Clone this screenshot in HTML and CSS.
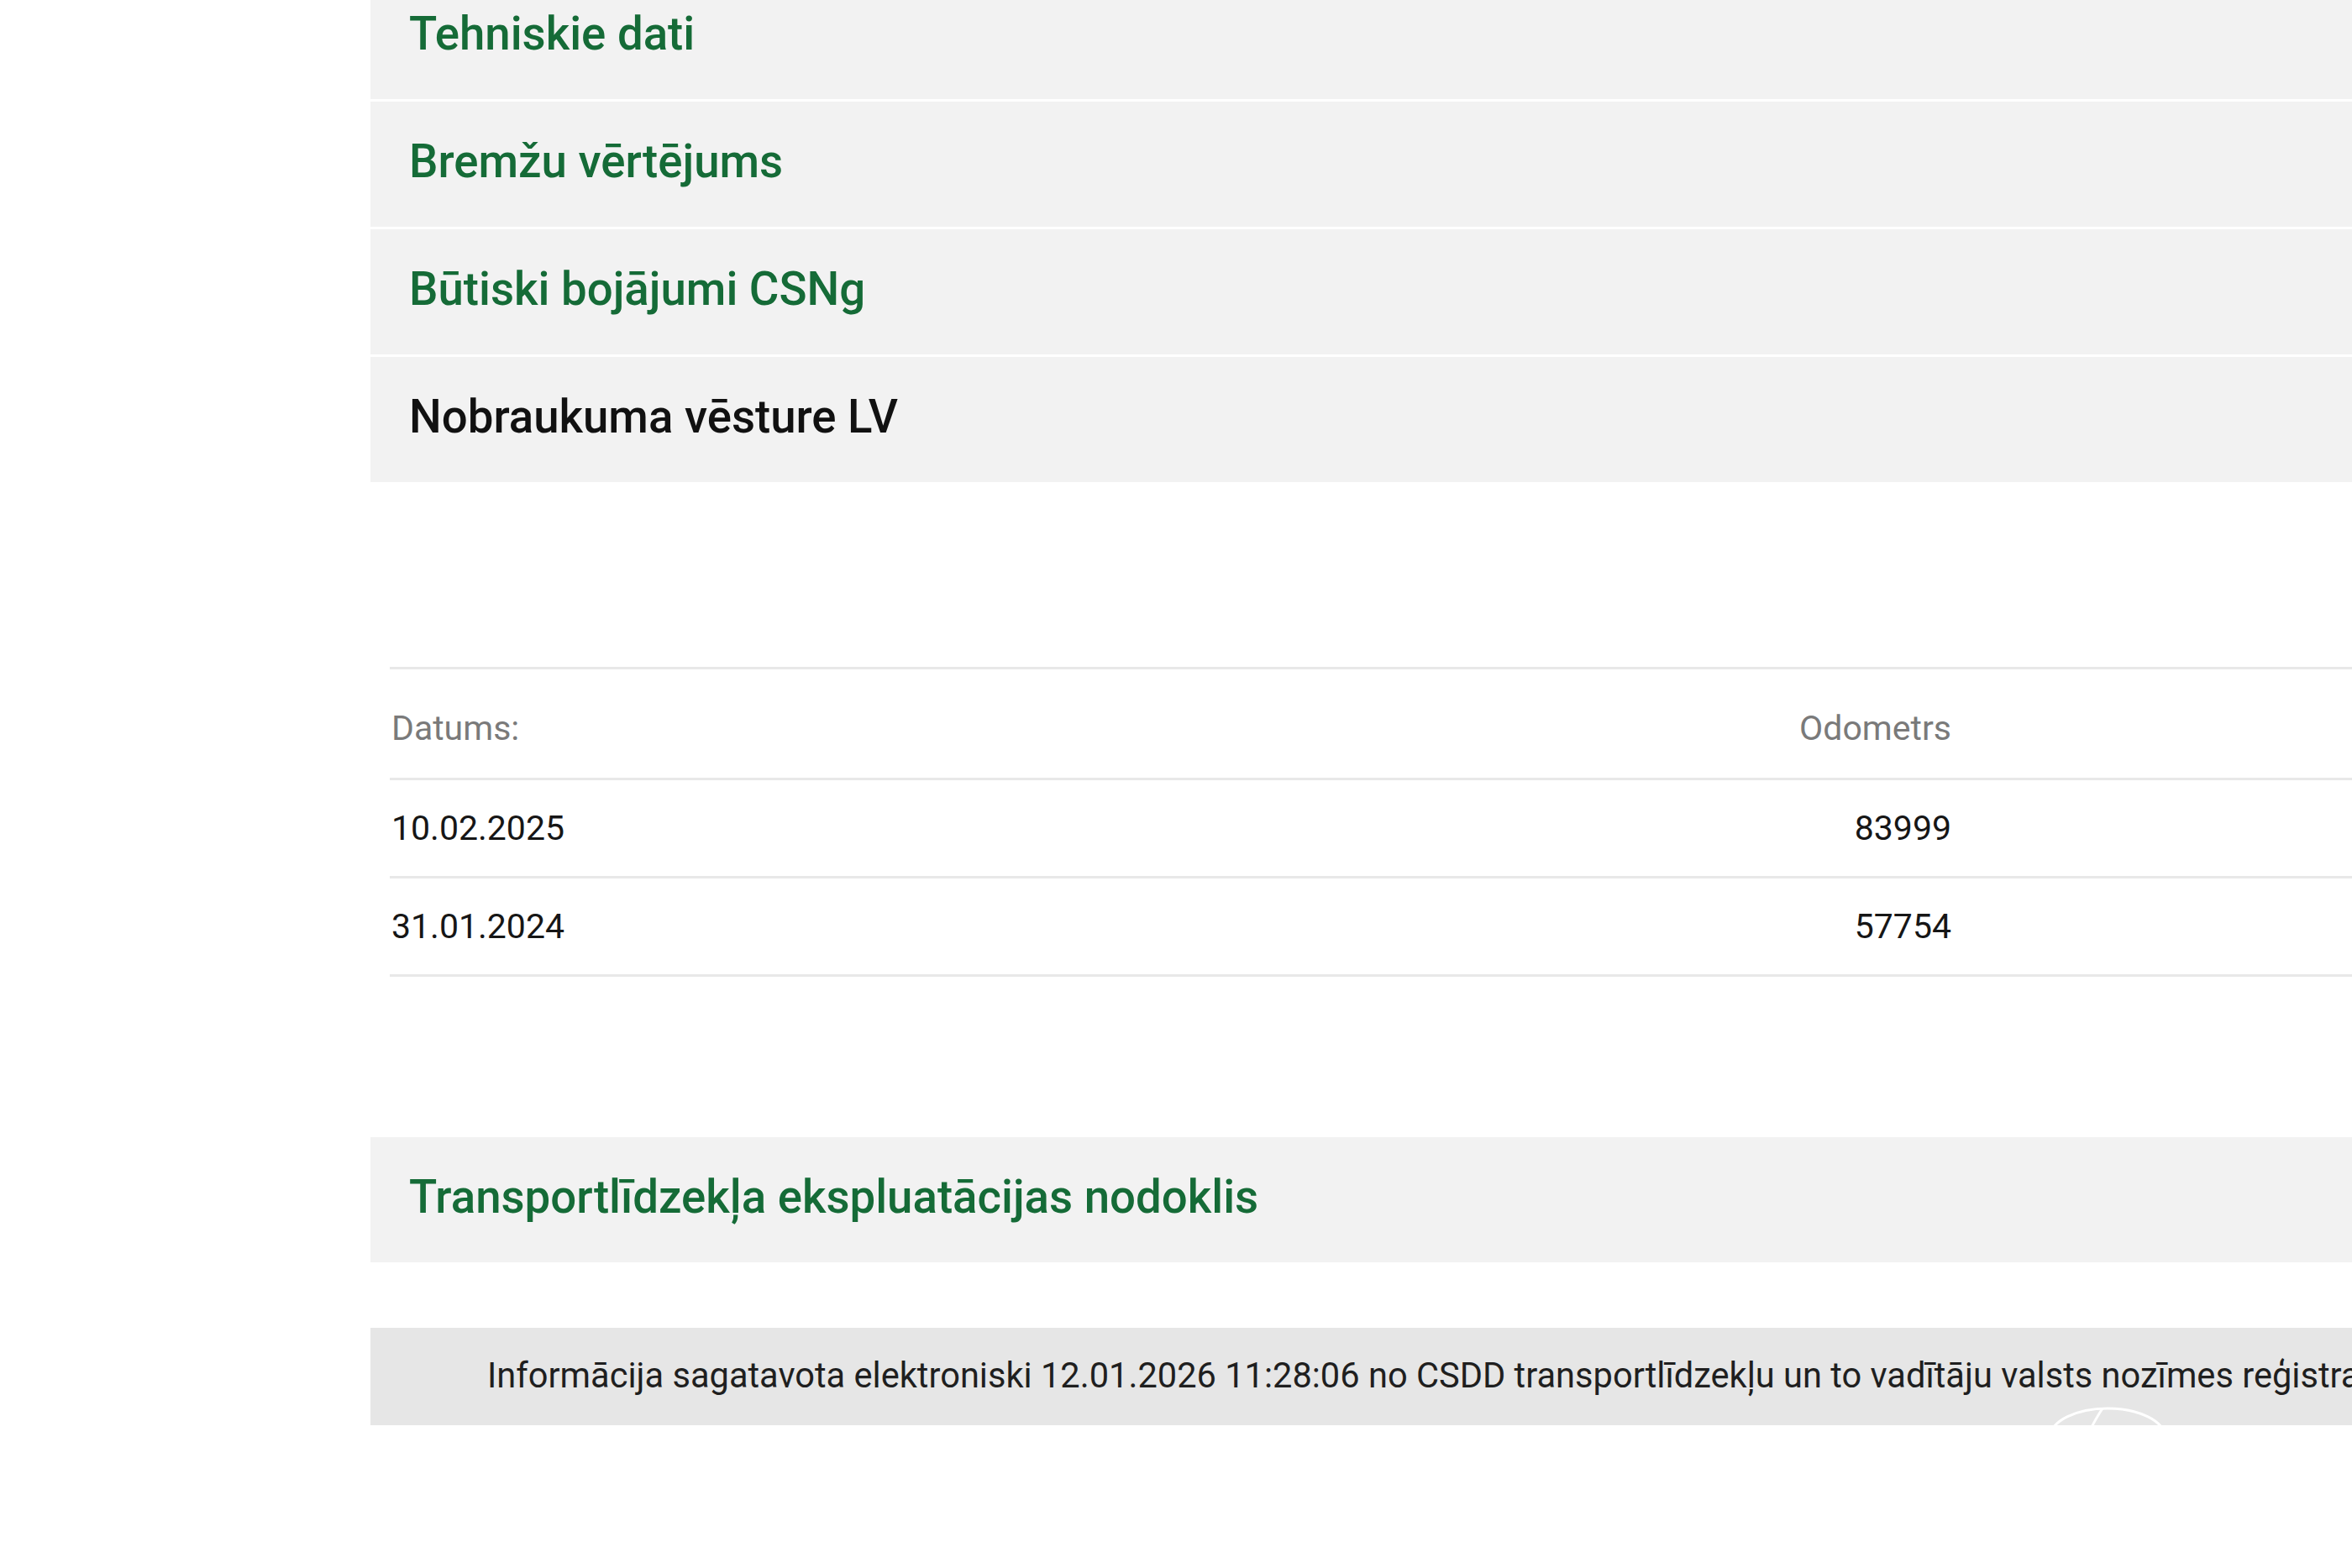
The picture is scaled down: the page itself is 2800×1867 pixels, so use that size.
FILE: index.html
```html
<!DOCTYPE html>
<html lang="lv">
<head>
<meta charset="utf-8">
<title>Nobraukuma vēsture</title>
<link rel="stylesheet" href="styles.css">
</head>
<body>
<div class="page">
  <div class="content">
    <div class="accordion">
      <div class="acc-row"><span class="acc-title">Tehniskie dati</span></div>
      <div class="acc-row"><span class="acc-title">Bremžu vērtējums</span></div>
      <div class="acc-row"><span class="acc-title">Būtiski bojājumi CSNg</span></div>
      <div class="acc-row acc-open"><span class="acc-title">Nobraukuma vēsture LV</span></div>
    </div>

    <div class="history">
      <div class="hist-row hist-head">
        <div class="c-date">Datums:</div>
        <div class="c-odo">Odometrs</div>
        <div class="c-rest"></div>
      </div>
      <div class="hist-row">
        <div class="c-date">10.02.2025</div>
        <div class="c-odo">83999</div>
        <div class="c-rest"></div>
      </div>
      <div class="hist-row">
        <div class="c-date">31.01.2024</div>
        <div class="c-odo">57754</div>
        <div class="c-rest"></div>
      </div>
    </div>

    <div class="accordion tax">
      <div class="acc-row"><span class="acc-title">Transportlīdzekļa ekspluatācijas nodoklis</span></div>
    </div>

    <div class="footer-note">
      <span class="note-text">Informācija sagatavota elektroniski 12.01.2026 11:28:06 no CSDD transportlīdzekļu un to vadītāju valsts nozīmes reģistra</span>
      <svg class="watermark" width="150" height="70" viewBox="0 0 150 70">
        <ellipse cx="72" cy="36" rx="68" ry="34" fill="none" stroke="#ffffff" stroke-width="3"/>
        <path d="M66 2 Q58 14 50 30" fill="none" stroke="#ffffff" stroke-width="3"/>
      </svg>
    </div>
  </div>
</div>
</body>
</html>
```

FILE: styles.css
```css
html, body {
  margin: 0;
  padding: 0;
  background: #ffffff;
  overflow: hidden;
}

body {
  width: 2800px;
  height: 1867px;
  font-family: Roboto, "Noto Sans", "Liberation Sans", sans-serif;
}

.page {
  padding-left: 441px;
  margin-top: -31px;
}

.content {
  width: 2600px;
  display: flex;
  flex-direction: column;
}

.accordion {
  display: flex;
  flex-direction: column;
  gap: 3px;
}

.acc-row {
  height: 149px;
  background: #f2f2f2;
  display: flex;
  align-items: center;
  padding-left: 46px;
  padding-bottom: 7px;
  box-sizing: border-box;
}

.acc-title {
  font-size: 54.6px;
  font-weight: 500;
  color: #156b37;
}

.acc-open .acc-title {
  color: #111111;
}

.history {
  margin-top: 220px;
  margin-left: 23px;
  display: flex;
  flex-direction: column;
  border-top: 3px solid #e8e8e8;
}

.hist-row {
  display: grid;
  grid-template-columns: 1000px 859px 1fr;
  align-items: center;
  height: 114px;
  border-bottom: 3px solid #e8e8e8;
  font-size: 41px;
  color: #161616;
}

.hist-head {
  height: 119px;
  padding-top: 10px;
  color: #7a7a7a;
}

.c-date {
  padding-left: 2px;
}

.c-odo {
  text-align: right;
}

.tax {
  margin-top: 191px;
}

.footer-note {
  position: relative;
  margin-top: 78px;
  height: 116px;
  background: #e6e6e6;
  display: flex;
  align-items: center;
  padding-left: 139px;
  padding-bottom: 4px;
  box-sizing: border-box;
  white-space: nowrap;
}

.note-text {
  font-size: 41.6px;
  color: #1f1f1f;
}

.watermark {
  position: absolute;
  left: 1996px;
  top: 94px;
}
```
